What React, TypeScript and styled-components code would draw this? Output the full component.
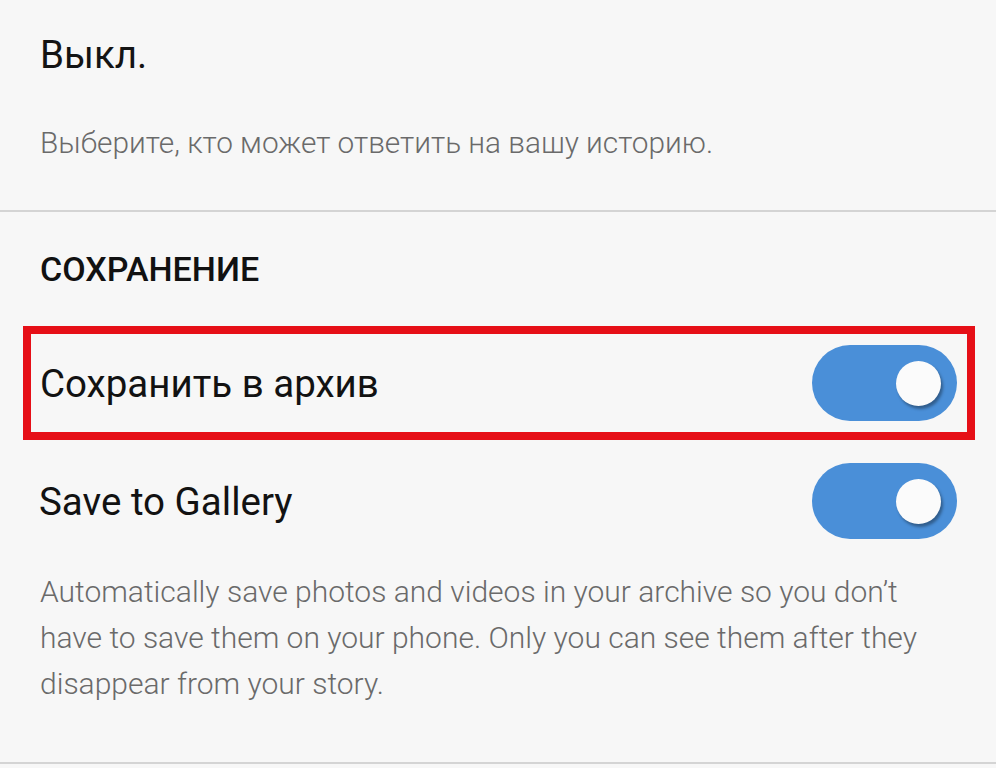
import React from "react";
import styled, { createGlobalStyle } from "styled-components";

const Global = createGlobalStyle`
  html, body { margin: 0; padding: 0; background: #f7f7f7; }
  body { font-family: Roboto, "Noto Sans", sans-serif; -webkit-font-smoothing: antialiased; }
  * { box-sizing: border-box; }
`;

const Page = styled.div`
  width: 996px;
  height: 768px;
  overflow: hidden;
  background: #f7f7f7;
  display: flex;
  flex-direction: column;
`;

const TopSection = styled.section`
  padding: 31px 40px 49px;
  border-bottom: 2px solid #d4d4d4;
  display: flex;
  flex-direction: column;
  gap: 46px;
`;

const Title = styled.div`
  font-size: 38.5px;
  line-height: 48px;
  color: #141414;
  font-weight: 400;
`;

const Hint = styled.p<{ $size?: number; $lh?: number }>`
  margin: 0;
  font-size: ${(p) => p.$size ?? 29.8}px;
  line-height: ${(p) => p.$lh ?? 36}px;
  color: #6a6a6a;
  font-weight: 300;
`;

const SaveSection = styled.section`
  display: flex;
  flex-direction: column;
  padding: 37px 0 0;
`;

const SectionHeader = styled.h2`
  margin: 0 0 37px;
  padding: 0 40px;
  font-size: 34px;
  line-height: 40px;
  font-weight: 500;
  color: #111;
`;

const Highlight = styled.div`
  margin: 0 21px 0 23px;
  border: 8px solid #e60f17;
  padding: 0 10px 0 9px;
`;

const Row = styled.div<{ $pad?: number; $gap?: number }>`
  height: 98px;
  display: flex;
  align-items: center;
  justify-content: space-between;
  padding: 0 ${(p) => p.$pad ?? 0}px;
  margin-top: ${(p) => p.$gap ?? 0}px;
`;

const Label = styled.span`
  font-size: 38.5px;
  color: #121212;
  font-weight: 400;
`;

const Track = styled.div`
  width: 145px;
  height: 76px;
  border-radius: 38px;
  background: #4a8fd8;
  display: flex;
  align-items: center;
  justify-content: flex-end;
  padding-right: 16px;
`;

const Knob = styled.div`
  width: 45px;
  height: 45px;
  border-radius: 50%;
  background: #fbfbfb;
  box-shadow: 2px 3px 3px rgba(0, 0, 0, 0.35);
`;

const Description = styled(Hint)`
  padding: 19px 40px 55px;
  border-bottom: 2px solid #d4d4d4;
`;

const Toggle = () => (
  <Track role="switch" aria-checked="true">
    <Knob />
  </Track>
);

export default function App() {
  return (
    <Page>
      <Global />
      <TopSection>
        <Title>Выкл.</Title>
        <Hint>Выберите, кто может ответить на вашу историю.</Hint>
      </TopSection>
      <SaveSection>
        <SectionHeader>СОХРАНЕНИЕ</SectionHeader>
        <Highlight>
          <Row>
            <Label>Сохранить в архив</Label>
            <Toggle />
          </Row>
        </Highlight>
        <Row $pad={39} $gap={12}>
          <Label>Save to Gallery</Label>
          <Toggle />
        </Row>
        <Description $size={30} $lh={46}>
          Automatically save photos and videos in your archive so you don’t have to save them on your phone. Only you can see them after they disappear from your story.
        </Description>
      </SaveSection>
    </Page>
  );
}
